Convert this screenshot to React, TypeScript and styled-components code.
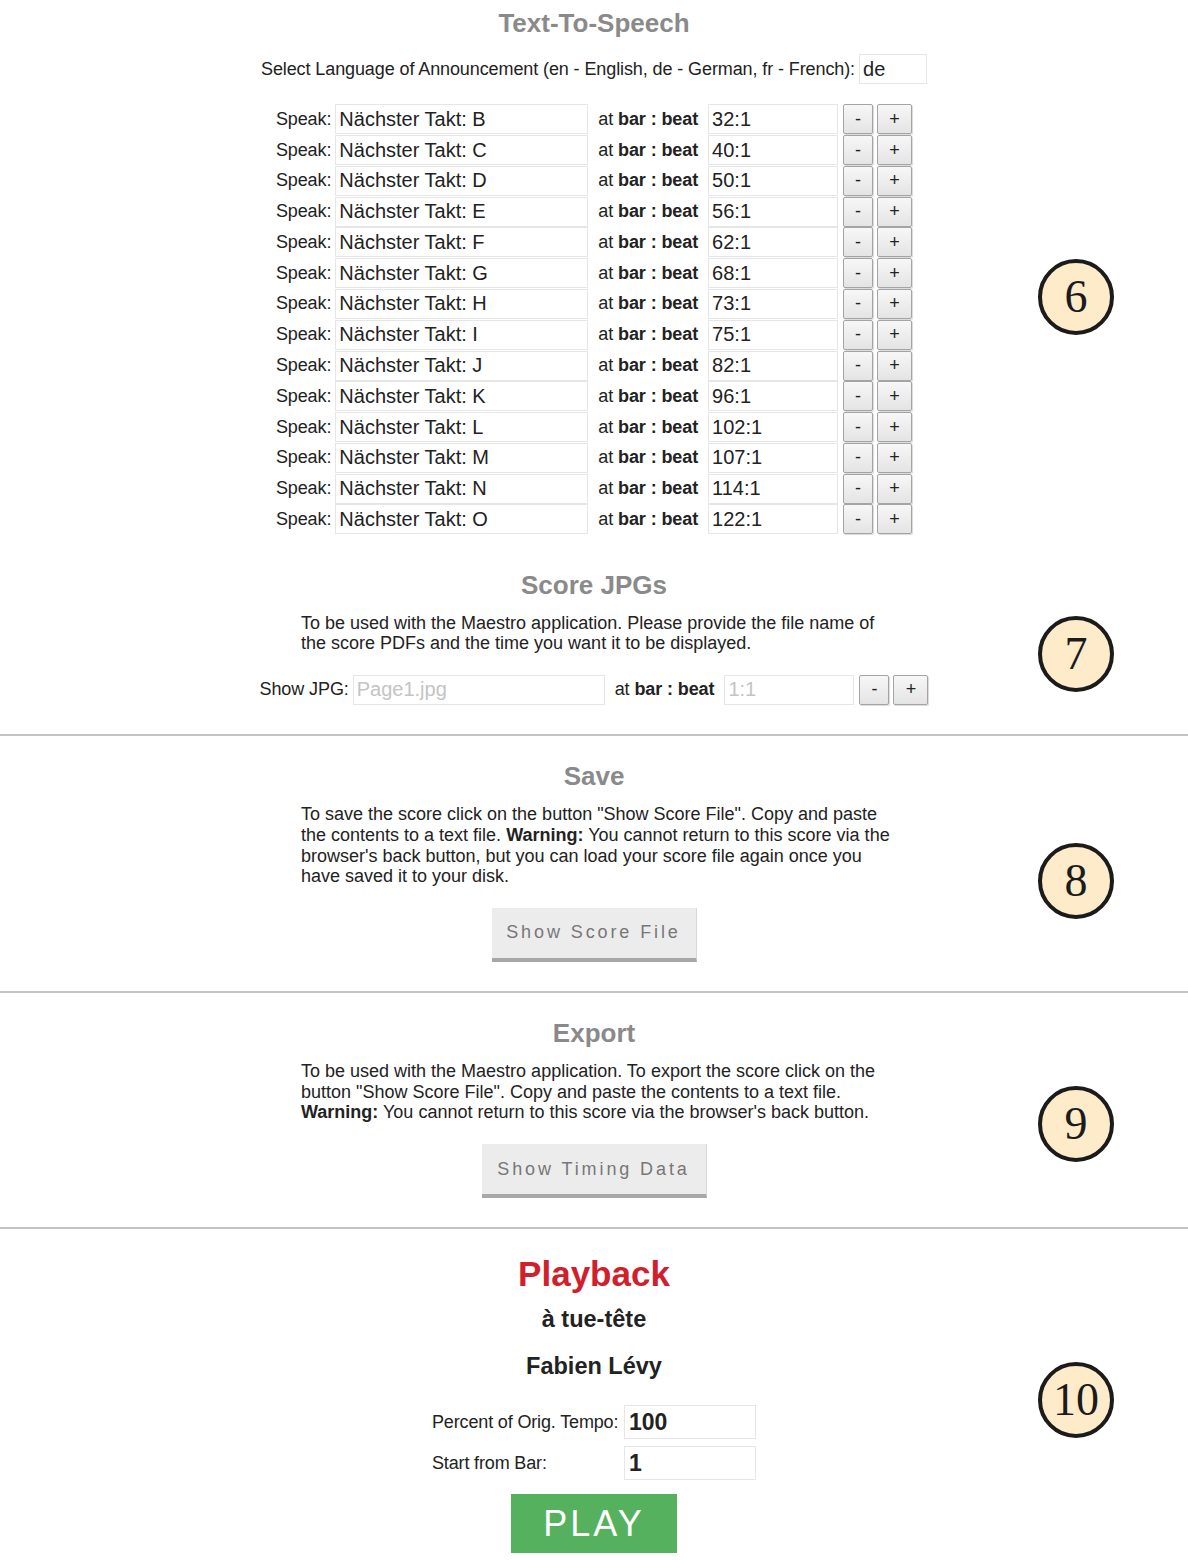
import React from "react";
import styled, { createGlobalStyle } from "styled-components";

const GlobalStyle = createGlobalStyle`
  body {
    margin: 0;
    background: #fff;
    font-family: "Liberation Sans", Arial, sans-serif;
    color: #222;
  }
`;

const announcements = [
  ["B", "32:1"],
  ["C", "40:1"],
  ["D", "50:1"],
  ["E", "56:1"],
  ["F", "62:1"],
  ["G", "68:1"],
  ["H", "73:1"],
  ["I", "75:1"],
  ["J", "82:1"],
  ["K", "96:1"],
  ["L", "102:1"],
  ["M", "107:1"],
  ["N", "114:1"],
  ["O", "122:1"],
];

export default function App() {
  return (
    <>
      <GlobalStyle />
      <Page>
        <Section>
          <Block>
            <Content>
              <Title>Text-To-Speech</Title>
              <LangRow>
                <Label>Select Language of Announcement (en - English, de - German, fr - French):</Label>
                <Field $width={68} value="de" readOnly />
              </LangRow>
              <Rows>
                {announcements.map(([letter, time]) => (
                  <SpeakRow key={letter}>
                    <Label>Speak:</Label>
                    <Field $width={253} value={`Nächster Takt: ${letter}`} readOnly />
                    <AtLabel>
                      at <b>bar : beat</b>
                    </AtLabel>
                    <Field $width={130} value={time} readOnly />
                    <StepButton $width={30}>-</StepButton>
                    <StepButton $width={35}>+</StepButton>
                  </SpeakRow>
                ))}
              </Rows>
            </Content>
            <Badge $top={251}>6</Badge>
          </Block>
          <Block>
            <Content>
              <Title $gap={35}>Score JPGs</Title>
              <Para>
                To be used with the Maestro application. Please provide the file name of the score
                PDFs and the time you want it to be displayed.
              </Para>
              <JpgRow>
                <Label>Show JPG:</Label>
                <Field $width={252} placeholder="Page1.jpg" />
                <AtLabel>
                  at <b>bar : beat</b>
                </AtLabel>
                <Field $width={130} placeholder="1:1" />
                <StepButton $width={30}>-</StepButton>
                <StepButton $width={35}>+</StepButton>
              </JpgRow>
            </Content>
            <Badge $top={81}>7</Badge>
          </Block>
        </Section>

        <Section>
          <Block>
            <Content>
              <Title $gap={25}>Save</Title>
              <Para>
                To save the score click on the button "Show Score File". Copy and paste the contents
                to a text file. <b>Warning:</b> You cannot return to this score via the browser's back
                button, but you can load your score file again once you have saved it to your disk.
              </Para>
              <ActionButton $width={205}>Show Score File</ActionButton>
            </Content>
            <Badge $top={107}>8</Badge>
          </Block>
        </Section>

        <Section>
          <Block>
            <Content>
              <Title $gap={25}>Export</Title>
              <Para>
                To be used with the Maestro application. To export the score click on the button
                "Show Score File". Copy and paste the contents to a text file. <b>Warning:</b> You
                cannot return to this score via the browser's back button.
              </Para>
              <ActionButton $width={225}>Show Timing Data</ActionButton>
            </Content>
            <Badge $top={93}>9</Badge>
          </Block>
        </Section>

        <Section $last>
          <Block>
            <Content>
              <PlayTitle>Playback</PlayTitle>
              <Piece>à tue-tête</Piece>
              <Piece $gap={21}>Fabien Lévy</Piece>
              <PlayForm>
                <FormRow>
                  <FormLabel>Percent of Orig. Tempo:</FormLabel>
                  <BigField value="100" readOnly />
                </FormRow>
                <FormRow>
                  <FormLabel>Start from Bar:</FormLabel>
                  <BigField value="1" readOnly />
                </FormRow>
              </PlayForm>
              <PlayButton>PLAY</PlayButton>
            </Content>
            <Badge $top={133}>10</Badge>
          </Block>
        </Section>
      </Page>
    </>
  );
}

const Page = styled.div`
  width: 1188px;
  padding-top: 8px;
`;

const Section = styled.section<{ $last?: boolean }>`
  padding-bottom: ${(p) => (p.$last ? "6px" : "29px")};
  border-bottom: ${(p) => (p.$last ? "none" : "2px solid #c4c4c4")};
`;

const Block = styled.div`
  display: grid;
  grid-template-columns: 1fr auto 1fr;
`;

const Content = styled.div`
  grid-column: 2;
  display: flex;
  flex-direction: column;
  align-items: center;
`;

const Badge = styled.div<{ $top: number }>`
  grid-column: 3;
  grid-row: 1;
  justify-self: end;
  align-self: start;
  margin-top: ${(p) => p.$top}px;
  margin-right: 74px;
  width: 68px;
  height: 68px;
  border: 4px solid #1b1b1b;
  border-radius: 50%;
  background: #fdebca;
  display: flex;
  align-items: center;
  justify-content: center;
  font-family: "Liberation Serif", "Times New Roman", serif;
  font-size: 46px;
  color: #1b1b1b;
  line-height: 1;
`;

const Title = styled.h2<{ $gap?: number }>`
  margin: ${(p) => p.$gap ?? 0}px 0 0;
  font-size: 26px;
  line-height: 30px;
  font-weight: bold;
  color: #8a8a8a;
`;

const Label = styled.span`
  font-size: 18px;
  color: #222;
  white-space: nowrap;
  letter-spacing: -0.1px;
`;

const AtLabel = styled.span`
  font-size: 18px;
  color: #222;
  white-space: nowrap;
  letter-spacing: -0.1px;
  b {
    font-weight: bold;
  }
`;

const Field = styled.input<{ $width: number }>`
  box-sizing: border-box;
  width: ${(p) => p.$width}px;
  height: 30px;
  border: 1px solid #e6e6e6;
  padding: 0 3px;
  font-family: "Liberation Sans", Arial, sans-serif;
  font-size: 20px;
  color: #222;
  background: #fff;
  outline: none;
  &::placeholder {
    color: #c4c4c4;
  }
`;

const LangRow = styled.div`
  margin-top: 16px;
  display: flex;
  align-items: center;
  gap: 4px;
`;

const Rows = styled.div`
  margin-top: 20px;
  display: flex;
  flex-direction: column;
`;

const SpeakRow = styled.div`
  display: flex;
  align-items: center;
  height: 30.77px;
  & > :nth-child(2) {
    margin-left: 4px;
  }
  & > :nth-child(3) {
    margin-left: 10px;
  }
  & > :nth-child(4) {
    margin-left: 10px;
  }
  & > :nth-child(5) {
    margin-left: 5px;
  }
  & > :nth-child(6) {
    margin-left: 4px;
  }
`;

const JpgRow = styled(SpeakRow)`
  margin-top: 20px;
  height: 31px;
  & > :nth-child(3) {
    margin-left: 10px;
  }
`;

const StepButton = styled.button<{ $width: number }>`
  box-sizing: border-box;
  width: ${(p) => p.$width}px;
  height: 30px;
  padding: 0;
  border: 1px solid #a4a4a4;
  border-radius: 2px;
  background: linear-gradient(#f7f7f7, #e4e4e4);
  box-shadow: 1px 1px 1px rgba(0, 0, 0, 0.15);
  font-family: "Liberation Sans", Arial, sans-serif;
  font-size: 18px;
  color: #222;
`;

const Para = styled.p`
  margin: 13px 0 0 6px;
  width: 592px;
  font-size: 18px;
  line-height: 20.7px;
  color: #222;
  text-align: left;
  b {
    font-weight: bold;
  }
`;

const ActionButton = styled.button<{ $width: number }>`
  margin-top: 21px;
  width: ${(p) => p.$width}px;
  height: 54px;
  box-sizing: border-box;
  border: none;
  border-right: 1px solid #d8d8d8;
  border-bottom: 4px solid #a8a8a8;
  background: #ececec;
  font-family: "Liberation Sans", Arial, sans-serif;
  font-size: 18px;
  letter-spacing: 2.9px;
  color: #777;
  padding: 0;
`;

const PlayTitle = styled.h1`
  margin: 25px 0 0;
  font-size: 35px;
  line-height: 40px;
  font-weight: bold;
  color: #d0202c;
`;

const Piece = styled.h3<{ $gap?: number }>`
  margin: ${(p) => p.$gap ?? 12}px 0 0;
  font-size: 23.5px;
  line-height: 26px;
  font-weight: bold;
  color: #222;
`;

const PlayForm = styled.div`
  margin-top: 26px;
  display: flex;
  flex-direction: column;
  gap: 7px;
`;

const FormRow = styled.div`
  display: flex;
  align-items: center;
  gap: 5px;
`;

const FormLabel = styled.span`
  width: 187px;
  font-size: 18px;
  letter-spacing: -0.15px;
  color: #222;
  white-space: nowrap;
`;

const BigField = styled.input`
  box-sizing: border-box;
  width: 132px;
  height: 34px;
  border: 1px solid #e6e6e6;
  padding: 0 4px;
  font-family: "Liberation Sans", Arial, sans-serif;
  font-size: 23px;
  font-weight: bold;
  color: #222;
  outline: none;
`;

const PlayButton = styled.button`
  margin-top: 14px;
  width: 166px;
  height: 59px;
  border: none;
  background: #56b15f;
  color: #fff;
  font-family: "Liberation Sans", Arial, sans-serif;
  font-size: 36px;
  letter-spacing: 3px;
  padding: 0;
`;
